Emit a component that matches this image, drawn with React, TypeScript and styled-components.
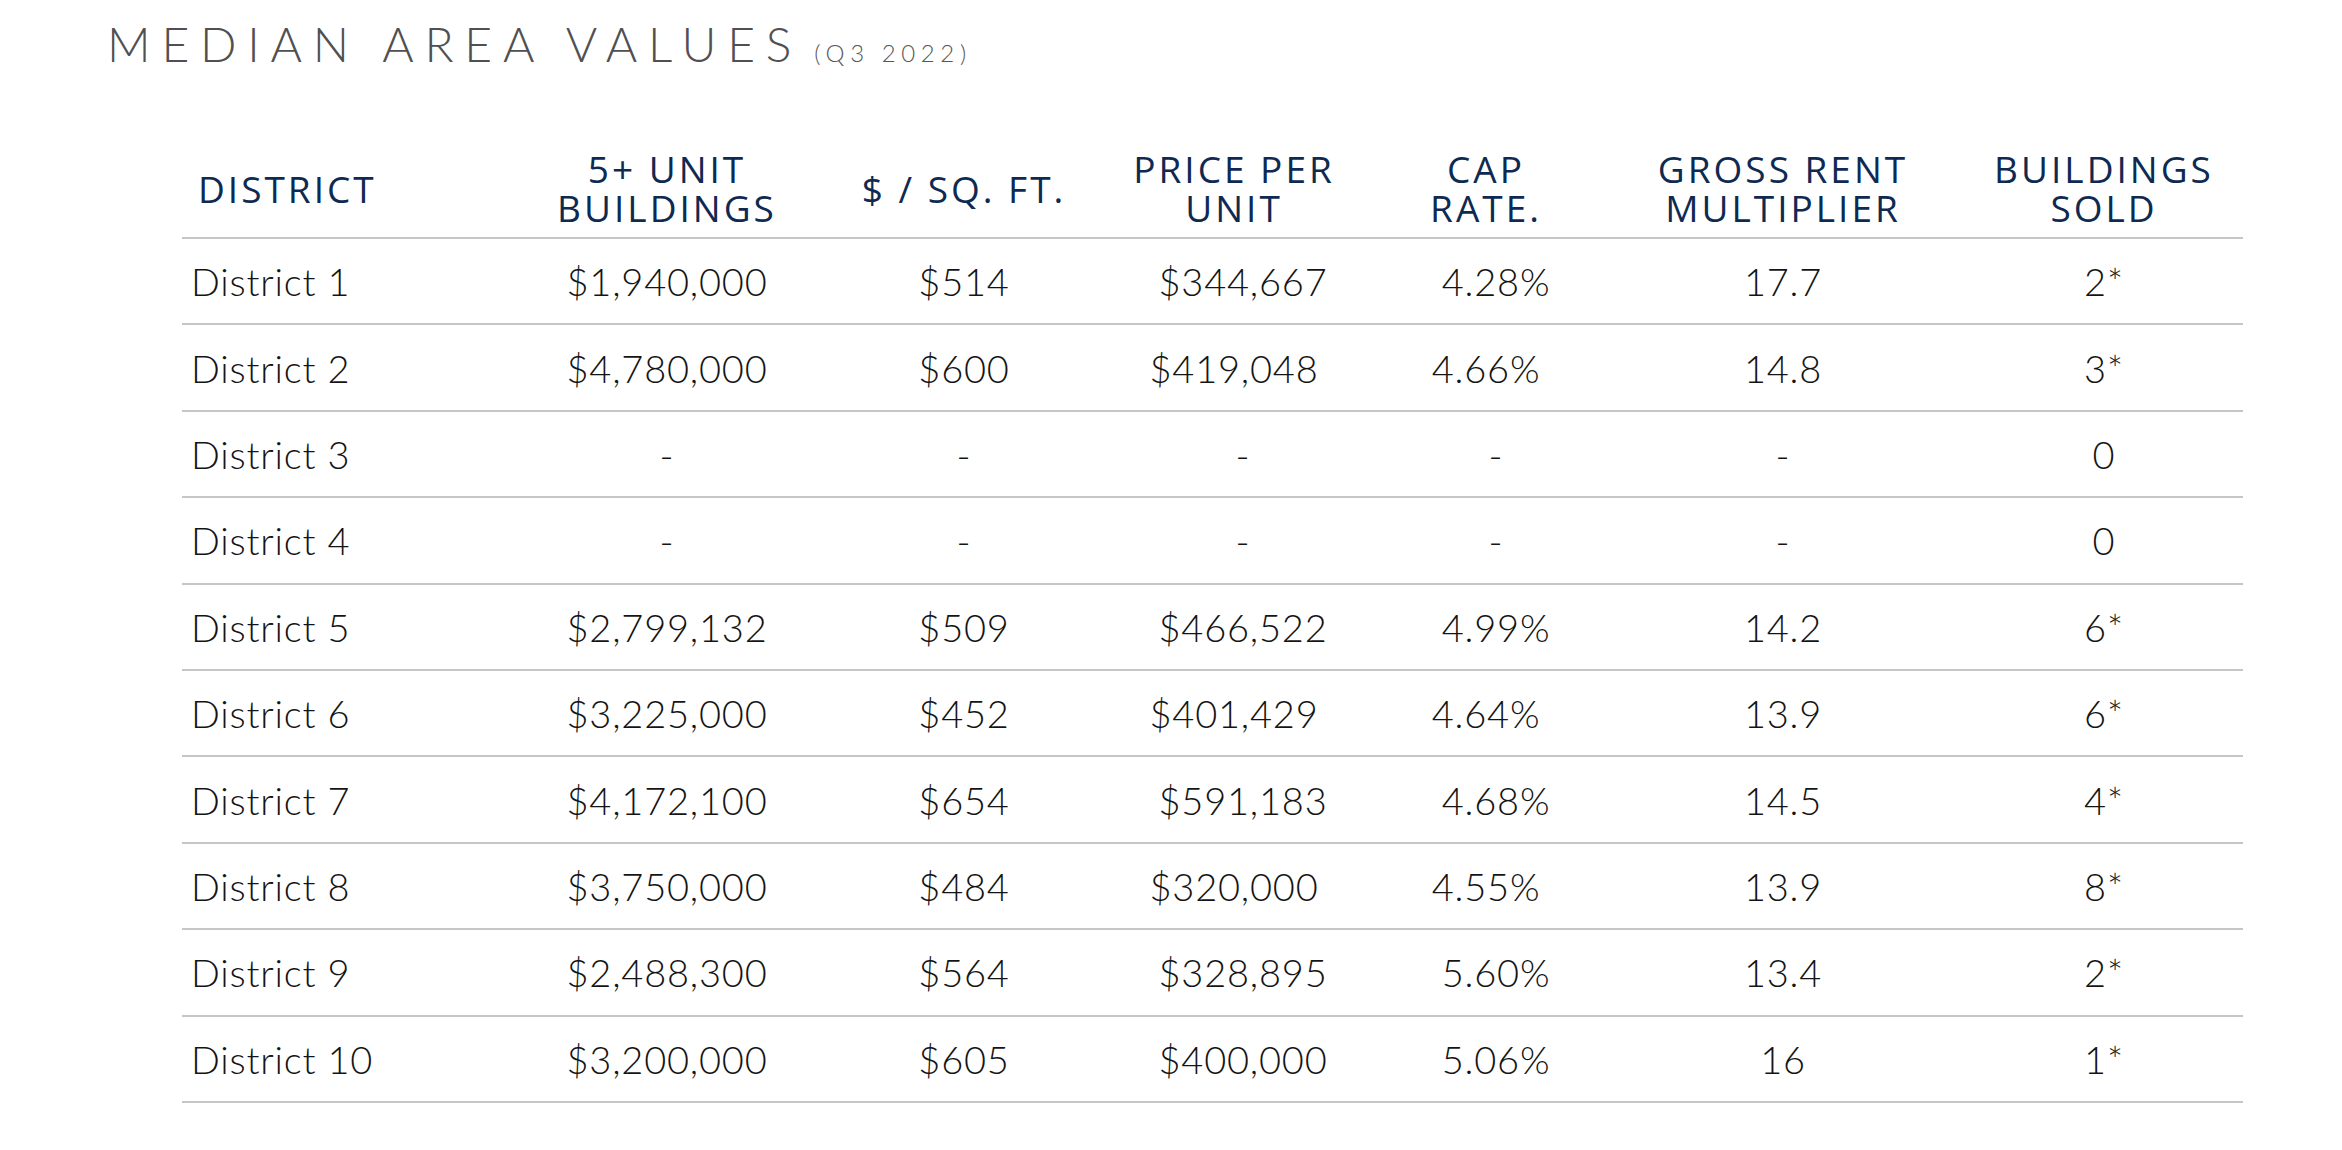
import React from "react";
import styled, { createGlobalStyle } from "styled-components";

const Global = createGlobalStyle`
  html, body { margin: 0; padding: 0; background: #ffffff; }
  body { font-family: "Lato", "Liberation Sans", sans-serif; }
`;

const Page = styled.div`
  width: 2342px;
  height: 1150px;
  box-sizing: border-box;
  padding: 20px 0 0 107px;
  background: #ffffff;
`;

const Title = styled.h1`
  margin: 0;
  display: flex;
  align-items: baseline;
  font-family: "Lato", "Liberation Sans", sans-serif;
  font-weight: 300;
  font-size: 48px;
  line-height: 48px;
  letter-spacing: 10.8px;
  color: #505052;
  white-space: nowrap;
`;

const Sub = styled.span`
  font-size: 24px;
  letter-spacing: 5.6px;
  margin-left: 12px;
  color: #58585a;
`;

const Table = styled.div`
  margin: 72px 0 0 75px;
  width: 2061px;
  display: flex;
  flex-direction: column;
`;

const cols = "321px 328px 266px 274px 230px 364px 278px";

const HeadRow = styled.div`
  display: grid;
  grid-template-columns: ${cols};
  align-items: center;
  padding-bottom: 10px;
  border-bottom: 2px solid #c6c6c6;
`;

const HeadCell = styled.div<{ $left?: boolean }>`
  font-family: "Open Sans", "Noto Sans", sans-serif;
  font-weight: 400;
  font-size: 37px;
  line-height: 39px;
  color: #0f2a52;
  text-align: ${(p) => (p.$left ? "left" : "center")};
  padding-left: ${(p) => (p.$left ? "16px" : "0")};
  white-space: nowrap;
  letter-spacing: 3px;
`;

const Row = styled.div`
  display: grid;
  grid-template-columns: ${cols};
  align-items: center;
  height: 86.4px;
  box-sizing: border-box;
  border-bottom: 2px solid #c6c6c6;
`;

const Cell = styled.div<{ $left?: boolean; $nudge?: number }>`
  font-family: "Lato", "Liberation Sans", sans-serif;
  font-weight: 300;
  font-size: 38px;
  line-height: 38px;
  letter-spacing: 0.8px;
  color: #141414;
  text-align: ${(p) => (p.$left ? "left" : "center")};
  padding-left: ${(p) => (p.$left ? 9 : (p.$nudge ?? 0) * 2)}px;
  white-space: nowrap;
`;

type R = { d: string; v: string[]; shift: boolean };

const rows: R[] = [
  { d: "District 1", v: ["$1,940,000", "$514", "$344,667", "4.28%", "17.7", "2*"], shift: true },
  { d: "District 2", v: ["$4,780,000", "$600", "$419,048", "4.66%", "14.8", "3*"], shift: false },
  { d: "District 3", v: ["-", "-", "-", "-", "-", "0"], shift: true },
  { d: "District 4", v: ["-", "-", "-", "-", "-", "0"], shift: true },
  { d: "District 5", v: ["$2,799,132", "$509", "$466,522", "4.99%", "14.2", "6*"], shift: true },
  { d: "District 6", v: ["$3,225,000", "$452", "$401,429", "4.64%", "13.9", "6*"], shift: false },
  { d: "District 7", v: ["$4,172,100", "$654", "$591,183", "4.68%", "14.5", "4*"], shift: true },
  { d: "District 8", v: ["$3,750,000", "$484", "$320,000", "4.55%", "13.9", "8*"], shift: false },
  { d: "District 9", v: ["$2,488,300", "$564", "$328,895", "5.60%", "13.4", "2*"], shift: true },
  { d: "District 10", v: ["$3,200,000", "$605", "$400,000", "5.06%", "16", "1*"], shift: true },
];

const headers: React.ReactNode[] = [
  <>5+ UNIT<br />BUILDINGS</>,
  <>$ / SQ. FT.</>,
  <>PRICE PER<br />UNIT</>,
  <>CAP<br />RATE.</>,
  <>GROSS RENT<br />MULTIPLIER</>,
  <>BUILDINGS<br />SOLD</>,
];

export default function App() {
  return (
    <>
      <Global />
      <Page>
        <Title>
          MEDIAN AREA VALUES<Sub>(Q3 2022)</Sub>
        </Title>
        <Table>
          <HeadRow>
            <HeadCell $left>DISTRICT</HeadCell>
            {headers.map((h, i) => (
              <HeadCell key={i}>{h}</HeadCell>
            ))}
          </HeadRow>
          {rows.map((r) => (
            <Row key={r.d}>
              <Cell $left>{r.d}</Cell>
              {r.v.map((v, i) => {
                let nudge = 0;
                if (r.shift && i === 2) nudge = 9;
                if (r.shift && i === 3) nudge = 10;
                return (
                  <Cell key={i} $nudge={nudge}>
                    {v}
                  </Cell>
                );
              })}
            </Row>
          ))}
        </Table>
      </Page>
    </>
  );
}
